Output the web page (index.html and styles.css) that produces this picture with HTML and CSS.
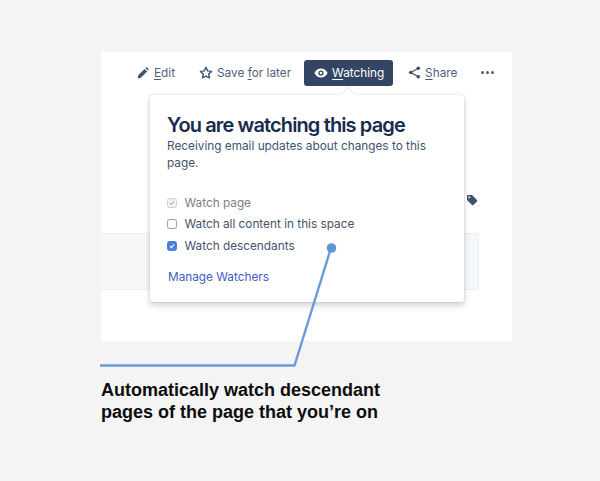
FILE: index.html
```html
<!DOCTYPE html>
<html lang="en">
<head>
<meta charset="utf-8">
<title>Watch descendants</title>
<link rel="stylesheet" href="styles.css">
</head>
<body>
<main class="figure">
  <section class="shot">
    <nav class="toolbar">
      <a class="tool tool-edit">
        <svg class="icon" viewBox="0 0 12 12"><path d="M0.6 11.4l0.7-3.2L7.6 1.9l2.5 2.5-6.3 6.3zM8.4 1.1l0.6-0.6c0.3-0.3 0.8-0.3 1.1 0l1.4 1.4c0.3 0.3 0.3 0.8 0 1.1l-0.6 0.6z" fill="#42526e"/></svg>
        <span><u>E</u>dit</span>
      </a>
      <a class="tool tool-save">
        <svg class="icon icon-star" viewBox="0 0 14 14"><path d="M7 1.3l1.7 3.6 3.9 0.5-2.9 2.7 0.8 3.9L7 10.1l-3.5 1.9 0.8-3.9-2.9-2.7 3.9-0.5z" fill="none" stroke="#42526e" stroke-width="1.4" stroke-linejoin="round"/></svg>
        <span>Save <u>f</u>or later</span>
      </a>
      <a class="tool tool-watching">
        <svg class="icon icon-eye" viewBox="0 0 14 10"><path fill-rule="evenodd" d="M7 0.5C10 0.5 12.5 2.6 13.6 5 12.5 7.4 10 9.5 7 9.5S1.500 7.400 0.400 5C1.500 2.600 4 0.500 7 0.500zM7 2.400a2.600 2.600 0 1 0 0 5.200 2.600 2.600 0 0 0 0-5.200zM7 3.700a1.300 1.300 0 1 1 0 2.600 1.300 1.300 0 0 1 0-2.600z" fill="#fff"/></svg>
        <span><u>W</u>atching</span>
      </a>
      <a class="tool tool-share">
        <svg class="icon icon-share" viewBox="0 0 13 13"><path d="M10.300 2.300L2.700 6.500l7.600 4.200" fill="none" stroke="#42526e" stroke-width="1.200"/><circle cx="10.300" cy="2.300" r="1.800" fill="#42526e"/><circle cx="2.700" cy="6.500" r="1.800" fill="#42526e"/><circle cx="10.300" cy="10.700" r="1.800" fill="#42526e"/></svg>
        <span><u>S</u>hare</span>
      </a>
      <a class="tool tool-more" aria-label="More"><i></i><i></i><i></i></a>
    </nav>
    <div class="page-row">
      <svg class="icon-tag" viewBox="0 0 12 12"><path fill-rule="evenodd" d="M1 1.500C1 1.200 1.200 1 1.500 1H6l5 5c0.400 0.400 0.400 1 0 1.400L7.400 11c-0.400 0.400-1 0.400-1.400 0L1 6zM3.300 2.300a1 1 0 1 0 0 2 1 1 0 0 0 0-2z" fill="#42526e"/></svg>
    </div>
    <div class="page-panel"></div>
  </section>

  <p class="caption">Automatically watch descendant<br>pages of the page that you’re on</p>

  <div class="popup">
    <h1 class="popup-title">You are watching this page</h1>
    <p class="popup-desc">Receiving email updates about changes to this page.</p>
    <ul class="options">
      <li class="option option-muted"><span class="box box-disabled"><svg viewBox="0 0 10 10"><path d="M2.500 5.200l1.800 1.800 3.200-4" fill="none" stroke="#8c8c8c" stroke-width="1.200"/></svg></span>Watch page</li>
      <li class="option"><span class="box"></span>Watch all content in this space</li>
      <li class="option"><span class="box box-checked"><svg viewBox="0 0 10 10"><path d="M2.500 5.200l1.800 1.800 3.200-4" fill="none" stroke="#fff" stroke-width="1.300"/></svg></span>Watch descendants</li>
    </ul>
    <a class="manage">Manage Watchers</a>
  </div>

  <svg class="callout" viewBox="0 0 600 481">
    <path d="M100 365.500H294.500L331 248" fill="none" stroke="#6a9bd8" stroke-width="2.400"/>
    <circle cx="331.500" cy="248" r="4.800" fill="#5f96d8"/>
  </svg>
</main>
</body>
</html>
```
FILE: styles.css
```css
* { box-sizing: border-box; }
html, body { margin: 0; height: 100%; }
body { background: #f4f4f4; overflow: hidden; }

.figure {
  position: relative;
  width: 600px;
  height: 481px;
  padding: 52px 88px 0 101px;
}

.shot {
  position: relative;
  height: 289px;
  background: #fff;
  display: flex;
  flex-direction: column;
}

.toolbar {
  display: flex;
  align-items: center;
  height: 27px;
  margin-top: 7px;
  padding-left: 36px;
  font: 11.800px/16px Inter, "Noto Sans", sans-serif;
  color: #505f79;
}

.tool { display: flex; align-items: center; white-space: nowrap; }
.tool u { text-underline-offset: 2px; text-decoration-thickness: 1px; }
.icon { display: block; width: 12px; height: 12px; margin-right: 5px; }
.icon-star { width: 14px; height: 14px; margin-right: 4px; }
.icon-eye { width: 14px; height: 10px; margin-right: 4px; }
.icon-share { width: 13px; height: 13px; margin-right: 4px; }

.tool-save { margin-left: 24px; }
.tool-watching {
  margin-left: 13px;
  width: 89px;
  height: 26px;
  padding-left: 10px;
  border-radius: 3px;
  background: #344563;
  color: #fff;
}
.tool-share { margin-left: 15px; }
.tool-more { margin-left: 24px; display: flex; gap: 2px; }
.tool-more i { width: 3px; height: 3px; border-radius: 50%; background: #505f79; }

.page-row { display: flex; justify-content: flex-end; padding: 108px 34px 0 0; }
.icon-tag { display: block; width: 12px; height: 12px; }

.page-panel {
  margin-top: 27px;
  margin-right: 33px;
  height: 57px;
  background: #f7f8fa;
  border: 1px solid #eef0f3;
  border-left: 0;
  border-radius: 0 3px 3px 0;
}

.caption {
  margin: 38px 0 0;
  font: bold 18px/22px "Liberation Sans", Arial, sans-serif;
  color: #0d0d0d;
  white-space: nowrap;
}

.popup {
  position: absolute;
  left: 150px;
  top: 95px;
  width: 314px;
  height: 207px;
  padding: 18px 17px 0;
  background: #fff;
  border-radius: 2px;
  box-shadow: 0 0 1px rgba(9, 30, 66, .35), 0 3px 6px rgba(9, 30, 66, .22);
  font-family: Inter, "Noto Sans", sans-serif;
  color: #42526e;
}
.popup::before {
  content: "";
  position: absolute;
  left: 193px;
  top: -5px;
  width: 10px;
  height: 10px;
  background: #fff;
  transform: rotate(45deg);
  box-shadow: -1px -1px 1px rgba(9, 30, 66, .08);
}

.popup-title {
  margin: 0;
  font-size: 20px;
  line-height: 24px;
  font-weight: 600;
  letter-spacing: -.88px;
  color: #172b4d;
  white-space: nowrap;
}
.popup-desc {
  margin: 1px 0 0;
  font-size: 11.800px;
  line-height: 17px;
  color: #42526e;
}

.options { list-style: none; margin: 20px 0 0; padding: 0; }
.option {
  display: flex;
  align-items: center;
  height: 21.500px;
  font-size: 11.800px;
  color: #42526e;
  white-space: nowrap;
}
.option-muted { color: #7a7f88; }
.box {
  width: 10px;
  height: 10px;
  margin-right: 7.500px;
  border: 1px solid #9a9a9a;
  border-radius: 2.500px;
  background: #fff;
  display: flex;
}
.box svg { width: 100%; height: 100%; display: block; }
.box-disabled { border-color: #d0d0d0; background: #f2f2f2; }
.box-checked { border-color: #4a7fe0; background: #4a7fe0; }

.manage {
  display: block;
  margin-top: 12px;
  padding-left: 1px;
  font-size: 11.800px;
  line-height: 16px;
  color: #3f5bc4;
}

.callout {
  position: absolute;
  left: 0;
  top: 0;
  width: 600px;
  height: 481px;
  pointer-events: none;
}
```
